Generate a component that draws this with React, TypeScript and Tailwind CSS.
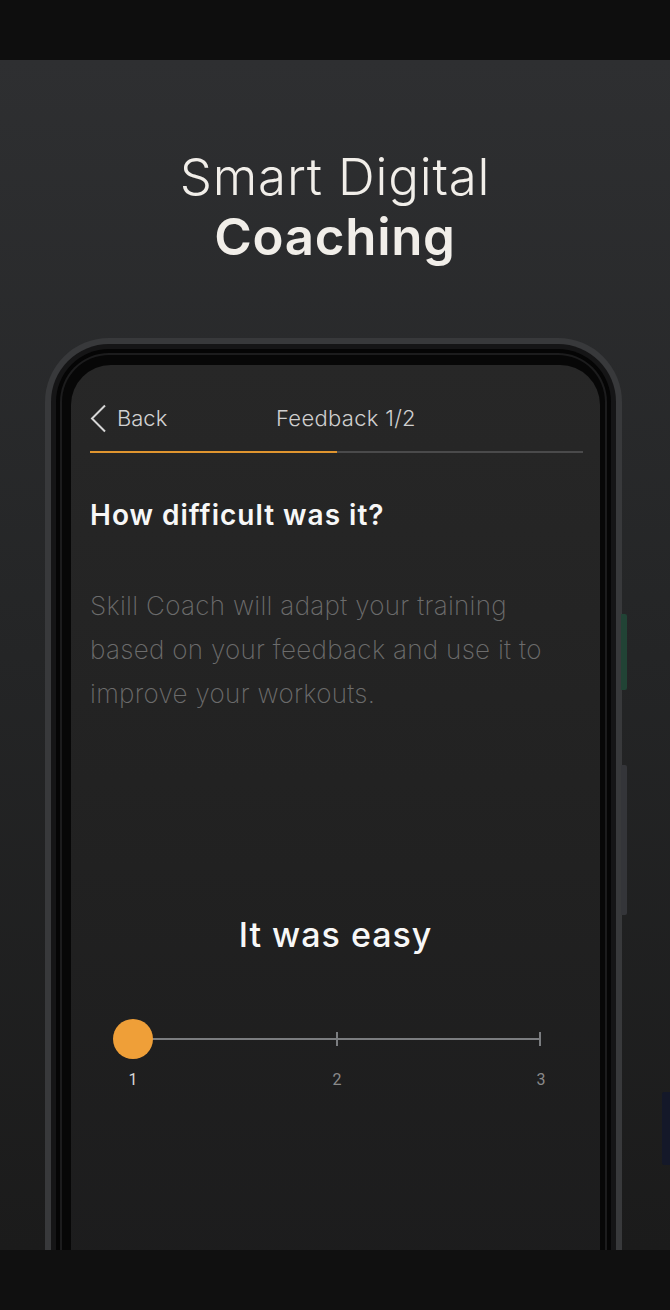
const FONT = "font-['Inter','Liberation_Sans',sans-serif]";

function Slider() {
  return (
    <div className="mt-[62px] flex flex-col items-start pl-[23px]">
      <div className="relative h-10 w-[428px]">
        <div className="absolute left-5 right-0 top-[19px] h-[2px] bg-[#7b7d80]" />
        <div className="absolute left-[223px] top-[13px] h-[14px] w-[2px] bg-[#7b7d80]" />
        <div className="absolute right-0 top-[13px] h-[14px] w-[2px] bg-[#7b7d80]" />
        <div className="absolute left-0 top-0 h-10 w-10 rounded-full bg-[#ef9f38]" />
      </div>
      <div className="mt-[11px] ml-[10px] flex w-[428px] justify-between font-['Roboto',sans-serif] text-[16px] leading-[20px]">
        <span className="w-5 text-center text-[#d8d8d8]">1</span>
        <span className="w-5 text-center text-[#8a8a8a]">2</span>
        <span className="w-5 text-center text-[#8a8a8a]">3</span>
      </div>
    </div>
  );
}

function Screen() {
  return (
    <div className="h-[1000px] rounded-t-[40px] bg-gradient-to-b from-[#272727] via-[#212121] to-[#1b1b1c] pl-[19px] pr-[17px] pt-[38px]">
      <div className="flex h-[30px] items-center">
        <div className="flex w-[186px] items-center gap-[10px]">
          <svg width="17" height="29" viewBox="0 0 17 29" fill="none">
            <path d="M15 1.5 L2 14.5 L15 27.5" stroke="#d6d6d6" strokeWidth="2" />
          </svg>
          <span className="text-[22px] font-light text-[#d2d2d2]">Back</span>
        </div>
        <span className="text-[22px] font-light tracking-[0.3px] text-[#cfcfcf]">Feedback 1/2</span>
      </div>
      <div className="mt-[18px] flex h-[2px]">
        <div className="w-[247px] bg-[#e0952f]" />
        <div className="flex-1 bg-[#4a4a4b]" />
      </div>
      <h2 className="mt-[44px] text-[28px] font-semibold leading-[36px] tracking-[1px] text-[#f7f7f7]">
        How difficult was it?
      </h2>
      <p className="mt-[51px] text-[26px] font-extralight leading-[44px] tracking-[0.3px] whitespace-nowrap text-[#6c6c6c]">
        Skill Coach will adapt your training
        <br />
        based on your feedback and use it to
        <br />
        improve your workouts.
      </p>
      <p className="mt-[197px] pr-[2px] text-center text-[34px] font-medium leading-[44px] tracking-[1px] text-[#f7f7f7]">
        It was easy
      </p>
      <Slider />
    </div>
  );
}

function Phone() {
  return (
    <div className="relative mt-[71px] ml-[45px] w-[577px] self-start">
      <div className="rounded-t-[64px] bg-[#38393b] px-[6px] pt-[6px]">
        <div className="rounded-t-[58px] bg-[#151516] px-[5px] pt-[5px]">
          <div className="rounded-t-[53px] bg-[#050505] px-[4px] pt-[4px]">
            <div className="rounded-t-[49px] bg-[#1c1c1d] px-[2px] pt-[2px]">
              <div className="rounded-t-[47px] bg-[#070707] pl-[9px] pr-[5px] pt-[10px]">
                <Screen />
              </div>
            </div>
          </div>
        </div>
      </div>
      <div className="absolute left-[576px] top-[276px] h-[76px] w-[6px] rounded-r-[2px] bg-[#214335]" />
      <div className="absolute left-[576px] top-[427px] h-[150px] w-[6px] rounded-r-[2px] bg-[#343539]" />
    </div>
  );
}

export default function App() {
  return (
    <div className={`${FONT} h-[1310px] w-[670px] bg-[#0e0e0e]`}>
      <div className="h-[60px] bg-[#0e0e0e]" />
      <section className="relative flex h-[1190px] flex-col items-center overflow-hidden bg-gradient-to-b from-[#2e2f31] via-[#242526] to-[#1b1b1b]">
        <h1 className="mt-[87px] text-center text-[51px] leading-[60px] text-[#f1eee9]">
          <span className="block font-light tracking-[0.8px]">Smart Digital</span>
          <span className="block font-semibold tracking-[0.7px]">Coaching</span>
        </h1>
        <Phone />
        <div className="absolute right-0 top-[1032px] h-[73px] w-[8px] rounded-l-[2px] bg-[#141829]" />
      </section>
      <div className="h-[60px] bg-[#101010]" />
    </div>
  );
}
